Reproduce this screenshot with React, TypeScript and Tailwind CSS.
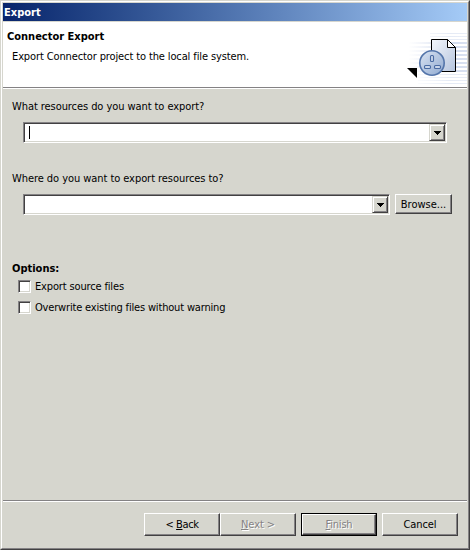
import type { ReactNode } from 'react';

const raised =
  'border border-t-white border-l-white border-r-[#424142] border-b-[#424142] bg-[#d6d6ce] shadow-[inset_-1px_-1px_0_#848284]';
const sunken =
  'border border-t-[#848284] border-l-[#848284] border-r-white border-b-white bg-white shadow-[inset_1px_1px_0_#424142,inset_-1px_-1px_0_#d6d6ce]';

function Combo({ className, focused = false }: { className: string; focused?: boolean }) {
  return (
    <div className={`flex h-[21px] items-center justify-between pr-px ${sunken} ${className}`}>
      <div className={`ml-[5px] h-[13px] w-px ${focused ? 'bg-black' : ''}`} />
      <div className="flex h-[17px] w-4 shrink-0 items-center justify-center border border-t-[#d6d6ce] border-l-[#d6d6ce] border-r-[#424142] border-b-[#424142] bg-[#d6d6ce] shadow-[inset_1px_1px_0_#fff,inset_-1px_-1px_0_#848284]">
        <svg width="7" height="4" viewBox="0 0 7 4" shapeRendering="crispEdges">
          <path d="M0 0h7v1h-1v1h-1v1h-1v1h-1v-1h-1v-1h-1v-1h-1z" />
        </svg>
      </div>
    </div>
  );
}

function Button({ className, children }: { className: string; children: ReactNode }) {
  return <div className={`flex items-center justify-center ${raised} ${className}`}>{children}</div>;
}

function Check({ label, className }: { label: string; className: string }) {
  return (
    <div className="flex h-[21px] items-center">
      <div className={`mr-1 size-[13px] ${sunken}`} />
      <span className={className}>{label}</span>
    </div>
  );
}

function BannerIcon() {
  return (
    <svg className="block" width="67" height="65" viewBox="400 22 67 65">
      <defs>
        <linearGradient id="fade" gradientUnits="userSpaceOnUse" x1="408" x2="467" y1="0" y2="0">
          <stop offset="0" stopColor="#dfe5f3" stopOpacity="0" />
          <stop offset="0.7" stopColor="#d3dcee" />
          <stop offset="1" stopColor="#d9e1f1" />
        </linearGradient>
        <linearGradient id="page" x1="0" y1="0" x2="1" y2="1">
          <stop offset="0" stopColor="#f4f7fc" />
          <stop offset="1" stopColor="#b5c4dd" />
        </linearGradient>
        <linearGradient id="disc" x1="0" y1="0" x2="1" y2="1">
          <stop offset="0" stopColor="#dce5f3" />
          <stop offset="1" stopColor="#8fa9d0" />
        </linearGradient>
      </defs>
      {[33, 36, 39].map((y) => (
        <rect key={y} x="430" y={y} width="37" height="1" fill="url(#fade)" opacity="0.6" />
      ))}
      {[42, 46, 50, 54, 58, 62, 66, 70].map((y) => (
        <rect key={y} x="409" y={y} width="58" height="2" fill="url(#fade)" />
      ))}
      {[74, 77, 80, 83].map((y) => (
        <rect key={y} x="418" y={y} width="49" height="1" fill="url(#fade)" opacity="0.6" />
      ))}
      <path d="M431.5 39.5h16l8 8v24h-24z" fill="url(#page)" stroke="#000" />
      <path d="M447.5 39.5v8h8z" fill="#fff" stroke="#000" />
      <circle cx="432" cy="63" r="12.2" fill="url(#disc)" stroke="#5475aa" strokeWidth="1.6" />
      <g fill="#c9d6ea" stroke="#4a6ba3" strokeWidth="1.1">
        <rect x="430.5" y="55.5" width="3" height="6" rx="1" />
        <rect x="424.5" y="65.5" width="6" height="3" rx="1" />
        <rect x="434.5" y="65.5" width="6" height="3" rx="1" />
      </g>
      <path d="M407 68h10v10z" fill="#000" />
    </svg>
  );
}

export default function App() {
  return (
    <div className="h-[550px] w-[470px] overflow-hidden border border-t-[#d6d6ce] border-l-[#d6d6ce] border-r-[#424142] border-b-[#424142] bg-[#d6d6ce] font-['DejaVu_Sans_Condensed','DejaVu_Sans',sans-serif] text-[11px] leading-[13px] whitespace-nowrap text-black [font-stretch:condensed]">
      <div className="flex h-full flex-col border border-t-white border-l-white border-r-[#848284] border-b-[#848284] px-px pt-px">
        <div className="flex h-[18px] shrink-0 items-center bg-linear-to-r from-[#08246b] to-[#a5cbf7] pl-px font-bold text-white">
          <span>Export</span>
        </div>
        <div className="mt-px flex h-[66px] shrink-0 justify-between border-b border-[#848284] bg-white">
          <div className="flex flex-col pt-2">
            <span className="pl-1 font-bold">Connector Export</span>
            <span className="mt-[7px] pl-[9px] tracking-[-0.12px]">Export Connector project to the local file system.</span>
          </div>
          <BannerIcon />
        </div>
        <div className="h-px shrink-0 bg-white" />
        <div className="flex flex-1 flex-col pt-[11px] pl-[9px]">
          <span className="tracking-[-0.07px]">What resources do you want to export?</span>
          <Combo className="mt-[9px] ml-[11px] w-[424px]" focused />
          <span className="mt-[29px] tracking-[-0.06px]">Where do you want to export resources to?</span>
          <div className="mt-[9px] ml-[11px] flex items-start">
            <Combo className="w-[367px]" />
            <Button className="ml-[5px] h-5 w-[57px]">
              <span>Browse...</span>
            </Button>
          </div>
          <span className="mt-[47px] font-bold">Options:</span>
          <div className="mt-px ml-[6px]">
            <Check label="Export source files" className="tracking-[-0.15px]" />
            <Check label="Overwrite existing files without warning" className="tracking-[-0.17px]" />
          </div>
        </div>
        <div className="h-px shrink-0 bg-[#848284]" />
        <div className="h-px shrink-0 bg-white" />
        <div className="flex h-[46px] shrink-0 pt-[11px] pl-[141px]">
          <Button className="h-[23px] w-[76px]">
            <span className="tracking-[-0.4px]">&lt; <u>B</u>ack</span>
          </Button>
          <Button className="h-[23px] w-[76px]">
            <span className="tracking-[-0.1px] text-[#848284] [text-shadow:1px_1px_0_#fff]"><u>N</u>ext &gt;</span>
          </Button>
          <div className="ml-[5px] h-[23px] w-[76px] border border-black">
            <Button className="h-full w-full">
              <span className="tracking-[-0.2px] text-[#848284] [text-shadow:1px_1px_0_#fff]"><u>F</u>inish</span>
            </Button>
          </div>
          <Button className="ml-[5px] h-[23px] w-[76px]">
            <span className="tracking-[-0.1px]">Cancel</span>
          </Button>
        </div>
      </div>
    </div>
  );
}
